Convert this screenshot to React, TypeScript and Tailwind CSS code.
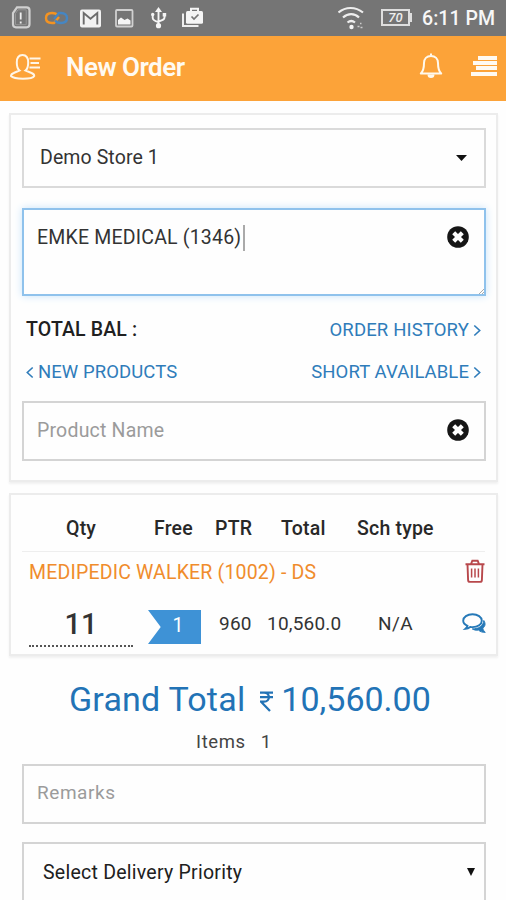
import type { ReactNode } from "react";

function ClearIcon() {
  return (
    <svg width="22" height="22" viewBox="0 0 22 22">
      <circle cx="11" cy="11" r="10.800" fill="#161616" />
      <path d="M6.700 6.700l8.600 8.600M15.300 6.700l-8.600 8.600" stroke="#fff" strokeWidth="4.200" />
    </svg>
  );
}

function Angle({ flip = false }: { flip?: boolean }) {
  return (
    <svg width="8" height="14" viewBox="0 0 8 14" fill="none" stroke="#2f7cba" strokeWidth="1.600">
      <path d={flip ? "M6.7 1.500L1.300 6.500l5.400 5" : "M1.300 1.500L6.700 6.500l-5.400 5"} />
    </svg>
  );
}

function StatusBar() {
  return (
    <div className="flex h-9 items-center bg-[#757575]">
      <svg width="210" height="36" viewBox="0 0 210 36" fill="none">
        <path d="M17 7.300h9.500c1.700 0 3 1 3 3v14c0 2-1.300 3-3 3h-10.500c-2 0-3-1-3-3V13z" stroke="#d0d0d0" strokeWidth="2.200" />
        <path d="M18 9.800h8.200v14.900H15.500V13.500z" stroke="#969696" strokeWidth="1" />
        <path d="M20.700 12.500v7M20.700 21.500v2" stroke="#eee" strokeWidth="1.800" />
        <path d="M58 15.500c-1.500-2-3-2.500-6-2.500-4 0-6 2-6 5s2 5 6 5h2l5-6" stroke="#f39322" strokeWidth="2.400" />
        <path d="M55 20.500c1.500 2 3 2.500 6 2.500 4 0 6-2 6-5s-2-5-6-5h-2l-5 6" stroke="#4686c2" strokeWidth="2.400" />
        <rect x="80" y="9.500" width="21" height="18" rx="2" fill="#f2f2f2" />
        <path d="M83.700 24.500V13l6.800 5.700 6.800-5.700v11.500" stroke="#6c6c6c" strokeWidth="1.900" />
        <rect x="116" y="10" width="16.500" height="16.500" rx="1" stroke="#d0d0d0" strokeWidth="1.800" />
        <path d="M118 24.500v-4.500l3-2.500 3.500 2.500 3-1.500 3 2v4z" fill="#f5f5f5" />
        <path d="M158.500 10v16M152.700 15v3c0 2 1.800 3 5.800 4M164.500 15v2.500c0 2-1.500 2.500-6 4" stroke="#f5f5f5" strokeWidth="1.900" />
        <path d="M158.500 7l3.500 5h-7z" fill="#f5f5f5" />
        <circle cx="152.700" cy="14.500" r="1.700" fill="#f5f5f5" />
        <path d="M162.700 13h3.500v3.500h-3.500z" fill="#f5f5f5" />
        <circle cx="158.500" cy="25.700" r="2.600" fill="#f5f5f5" />
        <path d="M183 13.500v12.500h15.500" stroke="#eee" strokeWidth="2" />
        <path d="M191 11V8.700h7V11" stroke="#f5f5f5" strokeWidth="2" />
        <rect x="186" y="11" width="17" height="12.700" rx="1.500" fill="#f5f5f5" />
        <path d="M191.500 16.500l2.500 2.500 4.500-4.500" stroke="#777" strokeWidth="1.700" />
      </svg>
      <svg className="ml-[128px]" width="28" height="36" viewBox="0 0 28 36" fill="none" stroke="#eee" strokeWidth="2.200">
        <path d="M.5 12.500c7-6 17-6 24.500 0M5 17.500c5-4.500 11.500-4.500 16 0M9.500 22.500c2.500-2 5-2 7.500 0" />
        <circle cx="13.500" cy="27" r="2.200" fill="#f5f5f5" stroke="none" />
        <path d="M19.500 26.500h2M22 23.500h1.500M22.500 27.500h2" stroke="#ccc" strokeWidth="1.600" />
      </svg>
      <div className="ml-[15px] -mt-0.5 flex h-[17px] w-[29px] items-center justify-center border-2 border-[#dedede] font-['Roboto'] text-[13px] leading-none font-medium italic text-[#eee]">70</div>
      <div className="-mt-0.5 h-[9px] w-[2px] bg-[#dedede]" />
      <div className="ml-[10px] mt-[2px] whitespace-nowrap font-['Roboto'] text-[19.500px] leading-6 font-medium tracking-[0.050px] text-[#f7f7f7]">6:11 PM</div>
    </div>
  );
}

function Header() {
  return (
    <div className="flex h-[65px] items-center bg-[#fca339]">
      <svg className="ml-[10px] -mt-1" width="32" height="28" viewBox="0 0 32 28" fill="none" stroke="#fff6e8" strokeWidth="2">
        <path d="M9.500 17.500c-2-1.500-2.700-4-2.700-8C6.800 4.500 8.800 2 12.500 2s5.700 2.500 5.700 7.500c0 4-.7 6.500-2.700 8l6 2.500c2 .8 2.800 1.900 2.700 3-1.200 2.200-5.700 2.700-11.200 2.700S3 25.200 1 23c-.1-1.100.700-2.200 2.700-3z" />
        <path d="M19.500 5.500h11M20.500 10h8.500M19.500 14.500h10.500" strokeWidth="2" />
      </svg>
      <div className="ml-[24px] -mt-[4px] whitespace-nowrap font-['Roboto'] text-[26px] leading-8 font-semibold tracking-[-0.500px] text-[#fffaf2]">New Order</div>
      <svg className="ml-auto -mt-[6px]" width="24" height="27" viewBox="0 0 24 27" fill="none" stroke="#fff9ed" strokeWidth="2" strokeLinejoin="round">
        <path d="M1.800 21.500c2.700-2.500 3.200-6 3.200-10.500 0-4 2.700-7 7-7s7 3 7 7c0 4.500.500 8 3.200 10.500z" />
        <path d="M12 1.500v2M9.500 22.500c0 1.700 1 2.500 2.500 2.500s2.500-.8 2.500-2.500" fill="#fff9ed" />
      </svg>
      <div className="ml-[28px] mr-[9px] -mt-[5px] flex flex-col items-end gap-px">
        <div className="h-[4px] w-[19px] bg-[#fffaf2]" />
        <div className="h-[4px] w-[24px] bg-[#fffaf2]" />
        <div className="h-[4px] w-[21px] bg-[#fffaf2]" />
        <div className="mt-px h-[4px] w-[26px] bg-[#fffaf2]" />
      </div>
    </div>
  );
}

function Card({ children, className }: { children: ReactNode; className: string }) {
  return (
    <section className={`mx-[9px] w-[489px] border-2 border-[#ececec] shadow-[0_2px_2px_#f1f1f1] ${className}`}>{children}</section>
  );
}

export default function App() {
  return (
    <main className="h-[900px] w-[506px] overflow-hidden bg-[#fefefe] font-['Roboto',sans-serif] whitespace-nowrap text-[#333]">
      <StatusBar />
      <Header />
      <Card className="mt-3 h-[369px] px-[11px] pt-[13px]">
        <div className="flex h-[60px] w-[464px] items-center justify-between border-2 border-[#dadada] pr-[17px] pl-4">
          <span className="text-[19.500px] tracking-[0.100px]">Demo Store 1</span>
          <svg width="11" height="6" viewBox="0 0 11 6"><path d="M0 0h11L5.500 6z" fill="#111" /></svg>
        </div>
        <div className="relative mt-5 flex h-[88px] w-[464px] justify-between border-2 border-[#8fc2ec] pt-[16px] pr-[15px] pl-[13px] shadow-[0_0_8px_#c9e4fa]">
          <div className="flex h-6 items-center">
            <span className="text-[19.500px] tracking-[0.200px]">EMKE MEDICAL (1346)</span>
            <span className="ml-[2px] h-[26px] w-[2px] bg-[#aaa]" />
          </div>
          <ClearIcon />
          <svg className="absolute right-0 bottom-0" width="6" height="6" viewBox="0 0 6 6" stroke="#aaa"><path d="M1 6l5-5M4 6l2-2" /></svg>
        </div>
        <div className="mt-[21px] flex h-[26px] items-center justify-between pl-[4px] pr-[4px]">
          <span className="text-[19.500px] font-medium tracking-[0.150px] text-[#202020]">TOTAL BAL :</span>
          <span className="mt-px flex items-center gap-[4px] text-[18.500px] tracking-[0.150px] text-[#2f7cba]">ORDER HISTORY <Angle /></span>
        </div>
        <div className="mt-[17px] flex h-[26px] items-center justify-between pl-[4px] pr-[4px] text-[18.500px] tracking-[0.080px] text-[#2f7cba]">
          <span className="flex items-center gap-[4px]"><Angle flip />NEW PRODUCTS</span>
          <span className="flex items-center gap-[4px]">SHORT AVAILABLE <Angle /></span>
        </div>
        <div className="mt-[15px] flex h-[60px] w-[464px] items-center justify-between border-2 border-[#d4d4d4] pr-[15px] pl-[13px]">
          <span className="text-[19.500px] tracking-[0.200px] text-[#9b9b9b]">Product Name</span>
          <div className="-mt-[2px]"><ClearIcon /></div>
        </div>
      </Card>
      <Card className="mt-[11px] h-[163px] px-[11px]">
        <div className="flex h-[57px] items-center border-b border-[#eee] pt-[11px] text-[19.500px] font-medium tracking-[0.200px] text-[#282828]">
          <span className="ml-[44px] w-[88px]">Qty</span>
          <span className="w-[61px]">Free</span>
          <span className="w-[66px]">PTR</span>
          <span className="w-[76px]">Total</span>
          <span>Sch type</span>
        </div>
        <div className="flex h-[42px] items-center justify-between pl-[7px]">
          <span className="-mt-px text-[19.500px] tracking-[0.180px] text-[#f08c2c]">MEDIPEDIC WALKER (1002) - DS</span>
          <svg className="-mt-[4px]" width="20" height="24" viewBox="0 0 20 24" fill="none" stroke="#b8484c" strokeWidth="1.900">
            <path d="M.5 5.200h19M2.500 5.200l.6 15.800c0 1.300.6 1.900 1.900 1.900h10c1.300 0 1.900-.6 1.900-1.900l.6-15.800M6 5l1.300-3.200h5.400L14 5" />
            <path d="M6.600 9.500v9M10 9.500v9M13.400 9.500v9" strokeWidth="1.500" />
          </svg>
        </div>
        <div className="flex h-[56px] items-start">
          <div className="ml-[7px] mt-[7px] flex h-[46px] w-[104px] justify-center border-b-2 border-dotted border-[#555] pt-[5px] text-[29px] leading-[36px] font-medium">11</div>
          <div className="ml-[15px] mt-[16px] flex h-[34px] w-[53px] items-center justify-center bg-[#3e92d6] pb-[2px] pl-[7px] text-[19.500px] text-white [clip-path:polygon(0_0,100%_0,100%_100%,0_100%,24%_50%)]">1</div>
          <span className="ml-[18px] mt-[18px] w-[48px] text-[19px] leading-6 tracking-[0.200px]">960</span>
          <span className="mt-[18px] w-[111px] text-[19px] leading-6 tracking-[0.200px]">10,560.0</span>
          <span className="mt-[18px] text-[19px] leading-6 tracking-[0.400px]">N/A</span>
          <svg className="-mr-px ml-auto mt-[19px]" width="24" height="21" viewBox="0 0 24 21" fill="none" stroke="#2679b8">
            <path d="M5.500 12.800C2.700 11.600 1.200 9.800 1.200 7.700 1.200 4 5.300 1.300 10.500 1.300s9.300 2.700 9.300 6.400-4.100 6.400-9.300 6.400c-.8 0-1.600-.1-2.300-.2-1.500 1.100-3 1.700-4.700 1.900 1-.9 1.700-1.800 2-3z" strokeWidth="1.900" />
            <path d="M21.800 7.500c2 3 1.500 5.800-1 7.700.4 1.700 1 2.900 2.500 4.100-3 .2-5.200-.7-6.800-2.200-2.400.3-4.500-.1-6.200-1.200C16.500 16 21.500 13 21.800 7.500z" fill="#2679b8" />
          </svg>
        </div>
      </Card>
      <div className="mt-[23px] flex h-[40px] items-center pl-[69px] text-[34px] leading-10 tracking-[0.200px] text-[#2273b6]">
        <span>Grand Total</span>
        <svg className="ml-[15px] mt-[4px]" width="13" height="21" viewBox="0 0 13 21" fill="none" stroke="#2273b6" strokeWidth="2.300">
          <path d="M0 1.700h13M0 6.200h13M1 1.700h3c6.500 0 6.500 9 0 9H1l9 9.300" />
        </svg>
        <span className="ml-[8px] tracking-[0px]">10,560.00</span>
      </div>
      <div className="mt-[12px] flex h-[24px] items-center pl-[196px] text-[18.500px] tracking-[0.600px] text-[#444]"><span>Items</span><span className="ml-[15px]">1</span></div>
      <div className="mt-[9px] ml-[22px] flex h-[60px] w-[464px] items-center border-2 border-[#d4d4d4] pl-[13px] text-[19px] tracking-[0.550px] text-[#9b9b9b]"><span className="-mt-px">Remarks</span></div>
      <div className="mt-[18px] ml-[22px] flex h-[60px] w-[464px] items-center justify-between border-2 border-[#d4d4d4] pr-[9px] pl-[19px] text-[19.500px] tracking-[0.250px] text-[#202020]">
        <span className="mt-[2px]">Select Delivery Priority</span>
        <svg width="8" height="8" viewBox="0 0 8 8"><path d="M0 0h8L4 8z" fill="#111" /></svg>
      </div>
    </main>
  );
}
